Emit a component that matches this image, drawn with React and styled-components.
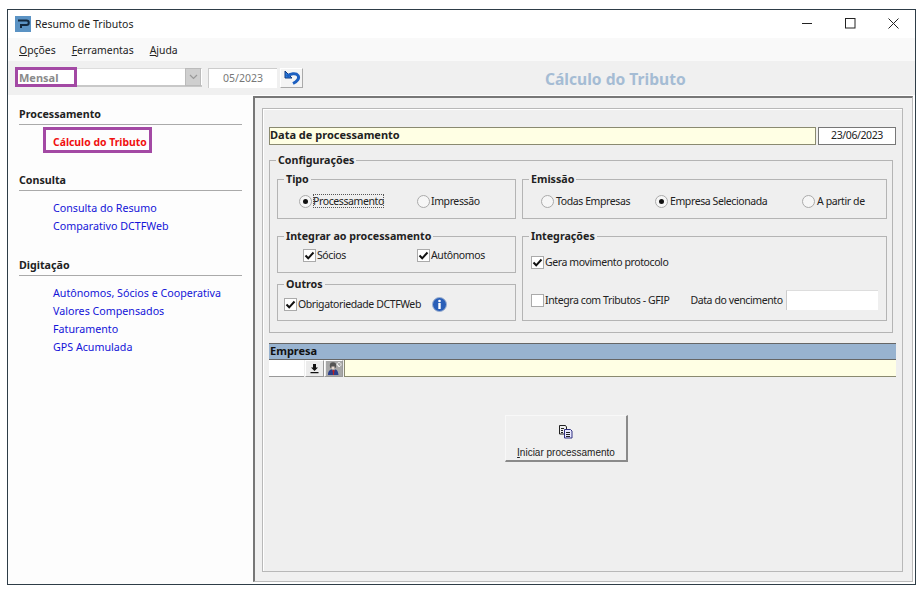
import React from "react";
import styled, { createGlobalStyle } from "styled-components";

const Global = createGlobalStyle`
  html, body { margin: 0; padding: 0; background: #fff; }
  body { font-family: "Noto Sans", "DejaVu Sans", sans-serif; font-size: 10.5px; color: #222; }
  * { box-sizing: border-box; }
`;

const Win = styled.div`
  width: 909px; height: 576px; margin: 9px 0 0 7px;
  border: 1px solid #2e3d47; display: flex; flex-direction: column; background: #fff; position: relative;
`;
const TitleBar = styled.div`
  height: 28px; display: flex; align-items: center; padding-left: 7px; background: #fff; font-size: 10.5px; color: #222;
`;
const TitleText = styled.span`margin-left: 4px;`;
const WinButtons = styled.div`
  margin-left: auto; display: flex; align-items: center; padding-bottom: 2px;
`;
const WinBtn = styled.button`
  width: 43px; height: 26px; border: 0; background: none; padding: 0; display: flex; align-items: center; justify-content: center;
`;
const MenuBar = styled.div`
  height: 23px; background: #f9f9f9; display: flex; align-items: center; padding-left: 11px; gap: 16px; font-size: 10.4px;
  u { text-decoration: underline; }
`;
const ToolBar = styled.div`
  height: 34px; background: #f0f0f0; display: flex; align-items: center; padding: 0 0 1px 7px; position: relative;
`;
const Combo = styled.div`
  width: 187px; height: 19px; background: #fff; border-bottom: 2px solid #c8c8c8; border-top: 1px solid #ddd; border-left: 1px solid #ddd;
  display: flex; align-items: center; justify-content: space-between; padding-left: 3px;
  font-weight: 700; font-size: 11px; color: #8a8a8a;
`;
const ComboArrow = styled.span`
  width: 16px; height: 18px; background: #cfcfcf; border: 1px solid #bbb; display: flex; align-items: center; justify-content: center; margin-right: 1px;
`;
const PeriodBox = styled.div`
  width: 69px; height: 20px; margin-left: 6px; background: #fff; border-top: 1px solid #ccc; border-left: 1px solid #ccc;
  display: flex; align-items: center; justify-content: center; color: #777; font-size: 10.5px;
`;
const BackBtn = styled.button`
  width: 23px; height: 20px; margin-left: 3px; padding: 0; background: #f4f4f4; border: 1px solid #fff; border-right-color: #aaa; border-bottom-color: #aaa;
  display: flex; align-items: center; justify-content: center;
`;
const PageTitle = styled.div`
  position: absolute; left: 537px; top: 7px; font-size: 15.6px; font-weight: 700; color: #a5bcd4; white-space: nowrap;
`;
const Highlight = styled.div`
  position: absolute; border: 3px solid #a349a4; pointer-events: none;
  left: ${p => p.$l}px; top: ${p => p.$t}px; width: ${p => p.$w}px; height: ${p => p.$h}px;
`;
const Body = styled.div`
  flex: 1; display: flex; min-height: 0;
`;
const Sidebar = styled.nav`
  width: 245px; background: #fdfdfd; padding: 11px 11px 0; position: relative;
`;
const SideHeading = styled.div`
  font-weight: 700; font-size: 10.7px; color: #222; height: 19px; line-height: 16px;
  border-bottom: 1px solid #aaa; margin-top: ${p => p.$mt || 0}px;
`;
const SideLinks = styled.div`
  display: flex; flex-direction: column; padding: 8px 0 0 34px;
`;
const SideLink = styled.a`
  height: 18px; line-height: 18px; font-size: ${p => (p.$active ? 10.4 : 10.7)}px; white-space: nowrap;
  color: ${p => (p.$active ? "#f01010" : "#1414d8")}; font-weight: ${p => (p.$active ? 700 : 400)};
`;
const Outer = styled.main`
  flex: 1; margin: 1px 2px 2px 0; padding: 10px 9px 9px 7px;
  background: #f0f0f0; border: 1px solid #d0d0d0; border-top: 2px solid #777; border-left: 2px solid #777;
  border-right-color: #bbb; border-bottom-color: #bbb;
`;
const Inner = styled.div`
  height: 100%; background: #efefef; border: 1px solid #b8b8b8; box-shadow: inset 1px 1px 0 #fff;
  padding: 18px 6px 0 6px;
`;
const DataRow = styled.div`
  display: flex; gap: 2px; height: 18px;
`;
const DataLabel = styled.div`
  flex: 1; background: #ffffe4; border: 1px solid #8a8a70; font-weight: 700; font-size: 11px; line-height: 14px;
`;
const DateBox = styled.div`
  width: 78px; background: #fff; border: 1px solid #777; text-align: center; line-height: 15px; font-size: 10.5px; letter-spacing: -0.4px;
`;
const Group = styled.fieldset`
  margin: 0; min-width: 0; border: 1px solid #b4b4b4; border-radius: 0; padding: 0;
`;
const ConfigGroup = styled(Group)`
  width: 624px; margin-top: 8px;
`;
const Legend = styled.legend`
  margin-left: 6px; padding: 0 2px; font-weight: 700; font-size: 10.7px; line-height: 14px; height: 14px; color: #222;
`;
const ConfigGrid = styled.div`
  display: grid; grid-template-columns: 239px 365px; column-gap: 6px; row-gap: 10px; padding: 5px 6px 11px 7px;
`;
const Stack = styled.div`display: flex; flex-direction: column; gap: 4px;`;
const BoxGroup = styled(Group)`
  height: ${p => p.$h}px;
`;
const BoxBody = styled.div`
  padding: ${p => p.$pad};
`;
const OptRow = styled.div`
  display: flex; align-items: center; height: 14px; margin-top: ${p => p.$mt || 0}px;
`;
const Opt = styled.label`
  display: flex; align-items: center; height: 14px; flex: none; width: ${p => (p.$w ? p.$w + "px" : "auto")}; white-space: nowrap; letter-spacing: -0.4px;
`;
const Radio = styled.span`
  width: 13px; height: 13px; border-radius: 50%; background: #f6f6f6; border: 1px solid #aaa; flex: none; margin-right: ${p => p.$mr ?? 2}px;
  display: flex; align-items: center; justify-content: center;
  &::after { content: ""; width: 5px; height: 5px; border-radius: 50%; background: ${p => (p.$on ? "#111" : "transparent")}; }
`;
const Check = styled.span`
  width: 13px; height: 13px; background: #fff; border: 1px solid #aaa; flex: none; margin-right: 1px;
  display: flex; align-items: center; justify-content: center;
`;
const Focused = styled.span`
  outline: 1px dotted #555; outline-offset: -1px; line-height: 14px;
`;
const InfoIcon = styled.svg`margin-left: 11px; flex: none;`;
const FieldLabel = styled.span`margin-left: 21px; white-space: nowrap; letter-spacing: -0.4px;`;
const DueInput = styled.div`
  width: 92px; height: 20px; margin-left: 3px; background: #fff; border-left: 1px solid #ccc; border-top: 1px solid #ddd; flex: none;
`;
const EmpresaBar = styled.div`
  margin-top: 10px; height: 17px; background: #98b3d0; border: 1px solid #666; border-width: 1px 0; font-weight: 700; font-size: 11px; line-height: 14px; padding-left: 1px; color: #111;
`;
const EmpresaRow = styled.div`
  display: flex; height: 17px;
`;
const CodeInput = styled.div`
  width: 35px; background: #fff; border-bottom: 1px solid #999;
`;
const SmallBtn = styled.button`
  width: 19px; padding: 0; margin-left: ${p => p.$ml || 0}px; background: #ececec; border: 1px solid #fff; border-right-color: #999; border-bottom-color: #999;
  display: flex; align-items: center; justify-content: center;
`;
const EmpresaName = styled.div`
  flex: 1; margin-left: 1px; background: #ffffe4; border: 1px solid #8a8a70; border-width: 0 0 1px 1px;
`;
const StartBtn = styled.button`
  display: flex; flex-direction: column; align-items: center; width: 123px; height: 47px; margin: 38px 0 0 236px; padding: 9px 0 0;
  background: #f0f0f0; border: 1px solid #f8f8f8; border-right: 2px solid #8a8a8a; border-bottom: 2px solid #8a8a8a;
  font-family: "Liberation Sans", sans-serif; font-size: 10px; color: #222;
  u { text-decoration: underline; }
`;
const StartLabel = styled.span`margin-top: 7px; white-space: nowrap; line-height: 14px;`;

const Tick = () => (
  <svg width="11" height="11" viewBox="0 0 11 11"><path d="M1.5 5.5 4.2 8.3 9.5 2.5" fill="none" stroke="#111" strokeWidth="2" /></svg>
);

export default function App() {
  return (
    <>
      <Global />
      <Win>
        <TitleBar>
          <svg width="16" height="16" viewBox="0 0 16 16">
            <rect width="16" height="16" fill="#5b93c4" />
            <path d="M3 4.5h8.5a1.8 1.8 0 0 1 0 4.5H6v3" fill="none" stroke="#12283f" strokeWidth="2" />
          </svg>
          <TitleText>Resumo de Tributos</TitleText>
          <WinButtons>
            <WinBtn aria-label="Minimizar"><svg width="11" height="11" viewBox="0 0 11 11"><path d="M0 5.5h10" stroke="#222" /></svg></WinBtn>
            <WinBtn aria-label="Maximizar"><svg width="11" height="11" viewBox="0 0 11 11"><rect x=".5" y=".5" width="9.5" height="9.5" fill="none" stroke="#222" /></svg></WinBtn>
            <WinBtn aria-label="Fechar"><svg width="11" height="11" viewBox="0 0 11 11"><path d="M.5.5l10 10M10.5.5l-10 10" stroke="#222" /></svg></WinBtn>
          </WinButtons>
        </TitleBar>
        <MenuBar>
          <span><u>O</u>pções</span>
          <span><u>F</u>erramentas</span>
          <span><u>A</u>juda</span>
        </MenuBar>
        <ToolBar>
          <Combo>
            Mensal
            <ComboArrow><svg width="9" height="6" viewBox="0 0 9 6"><path d="M1 1l3.5 3.5L8 1" fill="none" stroke="#999" strokeWidth="1.2" /></svg></ComboArrow>
          </Combo>
          <PeriodBox>05/2023</PeriodBox>
          <BackBtn aria-label="Voltar">
            <svg width="18" height="15" viewBox="0 0 18 15">
              <path d="M2 1v7h7z" fill="#2b7fe0" stroke="#123a80" strokeWidth="1" />
              <path d="M4 6.5c3-3 9-4 11-1 1.8 3-1 6-5 8" fill="none" stroke="#1c5fc0" strokeWidth="3" />
            </svg>
          </BackBtn>
          <PageTitle>Cálculo do Tributo</PageTitle>
          <Highlight $l={7} $t={6} $w={62} $h={20} />
        </ToolBar>
        <Body>
          <Sidebar>
            <SideHeading>Processamento</SideHeading>
            <SideLinks>
              <SideLink $active>Cálculo do Tributo</SideLink>
            </SideLinks>
            <Highlight $l={35} $t={32} $w={109} $h={26} />
            <SideHeading $mt={21}>Consulta</SideHeading>
            <SideLinks>
              <SideLink>Consulta do Resumo</SideLink>
              <SideLink>Comparativo DCTFWeb</SideLink>
            </SideLinks>
            <SideHeading $mt={22}>Digitação</SideHeading>
            <SideLinks>
              <SideLink>Autônomos, Sócios e Cooperativa</SideLink>
              <SideLink>Valores Compensados</SideLink>
              <SideLink>Faturamento</SideLink>
              <SideLink>GPS Acumulada</SideLink>
            </SideLinks>
          </Sidebar>
          <Outer>
            <Inner>
              <DataRow>
                <DataLabel>Data de processamento</DataLabel>
                <DateBox>23/06/2023</DateBox>
              </DataRow>
              <ConfigGroup>
                <Legend>Configurações</Legend>
                <ConfigGrid>
                  <BoxGroup $h={47}>
                    <Legend>Tipo</Legend>
                    <BoxBody $pad="8px 0 0 21px">
                      <OptRow>
                        <Opt $w={118}><Radio $on $mr={1} /><Focused>Processamento</Focused></Opt>
                        <Opt><Radio $mr={1} />Impressão</Opt>
                      </OptRow>
                    </BoxBody>
                  </BoxGroup>
                  <BoxGroup $h={47}>
                    <Legend>Emissão</Legend>
                    <BoxBody $pad="8px 0 0 18px">
                      <OptRow>
                        <Opt $w={114}><Radio />Todas Empresas</Opt>
                        <Opt $w={147}><Radio $on />Empresa Selecionada</Opt>
                        <Opt><Radio />A partir de</Opt>
                      </OptRow>
                    </BoxBody>
                  </BoxGroup>
                  <Stack>
                    <BoxGroup $h={44}>
                      <Legend>Integrar ao processamento</Legend>
                      <BoxBody $pad="5px 0 0 25px">
                        <OptRow>
                          <Opt $w={114}><Check><Tick /></Check>Sócios</Opt>
                          <Opt><Check><Tick /></Check>Autônomos</Opt>
                        </OptRow>
                      </BoxBody>
                    </BoxGroup>
                    <BoxGroup $h={44}>
                      <Legend>Outros</Legend>
                      <BoxBody $pad="6px 0 0 6px">
                        <OptRow>
                          <Opt><Check><Tick /></Check>Obrigatoriedade DCTFWeb</Opt>
                          <InfoIcon width="15" height="15" viewBox="0 0 15 15">
                            <circle cx="7.5" cy="7.5" r="7" fill="#2a5fb8" stroke="#9fb2d0" />
                            <circle cx="7.5" cy="4" r="1.3" fill="#fff" />
                            <rect x="6.3" y="6" width="2.4" height="6" fill="#fff" />
                          </InfoIcon>
                        </OptRow>
                      </BoxBody>
                    </BoxGroup>
                  </Stack>
                  <BoxGroup $h={92}>
                    <Legend>Integrações</Legend>
                    <BoxBody $pad="12px 0 0 8px">
                      <OptRow>
                        <Opt><Check><Tick /></Check>Gera movimento protocolo</Opt>
                      </OptRow>
                      <OptRow $mt={24}>
                        <Opt><Check />Integra com Tributos - GFIP</Opt>
                        <FieldLabel>Data do vencimento</FieldLabel>
                        <DueInput />
                      </OptRow>
                    </BoxBody>
                  </BoxGroup>
                </ConfigGrid>
              </ConfigGroup>
              <EmpresaBar>Empresa</EmpresaBar>
              <EmpresaRow>
                <CodeInput />
                <SmallBtn $ml={1} aria-label="Importar">
                  <svg width="11" height="11" viewBox="0 0 11 11"><path d="M4 1h3v3.5h2L5.5 8 2 4.5h2zM1.5 9h8v1.2h-8z" fill="#111" /></svg>
                </SmallBtn>
                <SmallBtn aria-label="Pesquisar">
                  <svg width="16" height="15" viewBox="0 0 16 15">
                    <rect width="16" height="15" fill="#a8a8a8" />
                    <circle cx="7" cy="4.5" r="3.2" fill="#555" />
                    <path d="M5.5 5.5h3V8h-3z" fill="#e8d8d0" />
                    <path d="M2 14c0-4 2-5.5 4-5.5l1.5 2 1.5-2c2 0 3 1.5 3.5 5.5z" fill="#2b3f8a" />
                    <path d="M6.5 9h2l-.6 5h-.8z" fill="#c02020" />
                    <path d="M11 3l3 3M13 1.5a2 2 0 1 0 .1 0z" fill="none" stroke="#eee" />
                  </svg>
                </SmallBtn>
                <EmpresaName />
              </EmpresaRow>
              <StartBtn>
                <svg width="16" height="14" viewBox="0 0 16 14">
                  <path d="M1.5.5h6l1 1.5v7h-7z" fill="#eee" stroke="#222" />
                  <path d="M6.5 4.5h6l1.5 1.5v7H6.5z" fill="#e8e8ff" stroke="#303080" />
                  <path d="M3 3.5h3M3 5.5h2M3 7.5h2M8 7.5h4M8 9.5h4M8 11.5h4" stroke="#222" />
                </svg>
                <StartLabel><u>I</u>niciar processamento</StartLabel>
              </StartBtn>
            </Inner>
          </Outer>
        </Body>
      </Win>
    </>
  );
}
